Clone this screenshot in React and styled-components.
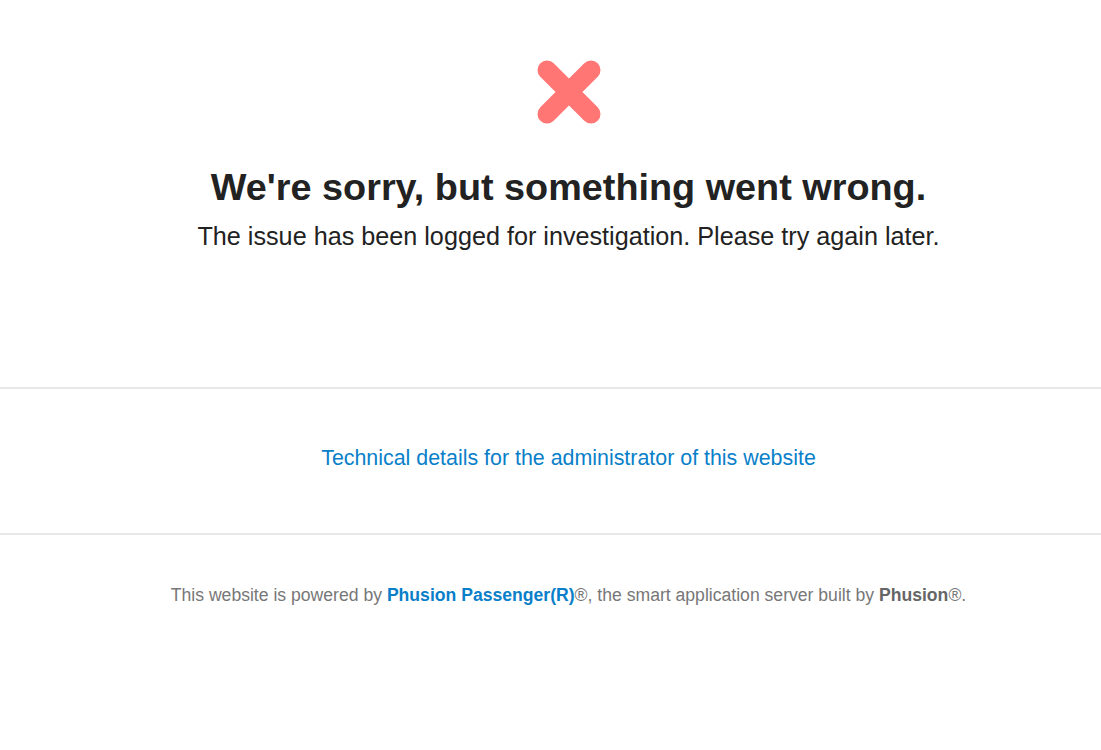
import React from "react";
import styled, { createGlobalStyle } from "styled-components";

const GlobalStyle = createGlobalStyle`
  html, body {
    margin: 0;
    padding: 0;
    background: #ffffff;
  }
  body {
    font-family: "Liberation Sans", Arial, Helvetica, sans-serif;
    color: #222;
  }
`;

export default function App() {
  return (
    <Page>
      <GlobalStyle />
      <Hero>
        <ErrorIcon viewBox="0 0 64 64" aria-hidden="true">
          <path
            d="M10 10 L54 54 M54 10 L10 54"
            stroke="#ff7675"
            strokeWidth="19"
            strokeLinecap="round"
          />
        </ErrorIcon>
        <Title>We're sorry, but something went wrong.</Title>
        <Lead>The issue has been logged for investigation. Please try again later.</Lead>
      </Hero>
      <Details>
        <DetailsLink href="#">Technical details for the administrator of this website</DetailsLink>
      </Details>
      <Footer>
        This website is powered by <FooterLink href="#">Phusion Passenger(R)</FooterLink>®, the
        smart application server built by <Brand>Phusion</Brand>®.
      </Footer>
    </Page>
  );
}

const Page = styled.div`
  display: flex;
  flex-direction: column;
  min-height: 750px;
`;

const Hero = styled.section`
  display: flex;
  flex-direction: column;
  align-items: center;
  padding: 60px 0 0 36px;
  height: 327px;
  border-bottom: 2px solid #e8e8e8;
`;

const ErrorIcon = styled.svg`
  width: 64px;
  height: 64px;
  display: block;
`;

const Title = styled.h1`
  margin: 41px 0 0;
  font-size: 37.8px;
  font-weight: bold;
  line-height: 44px;
  color: #222;
`;

const Lead = styled.p`
  margin: 12px 0 0;
  font-size: 25.2px;
  line-height: 30px;
  color: #222;
`;

const Details = styled.section`
  display: flex;
  justify-content: center;
  align-items: center;
  padding: 0 0 6px 36px;
  height: 138px;
  border-bottom: 2px solid #e8e8e8;
`;

const DetailsLink = styled.a`
  font-size: 21.4px;
  color: #0a7fc9;
  text-decoration: none;
`;

const Footer = styled.footer`
  padding: 49px 0 0 36px;
  text-align: center;
  font-size: 17.6px;
  line-height: 22px;
  color: #777;
`;

const FooterLink = styled.a`
  color: #0a7fc9;
  font-weight: bold;
  text-decoration: none;
`;

const Brand = styled.strong`
  color: #666;
`;
